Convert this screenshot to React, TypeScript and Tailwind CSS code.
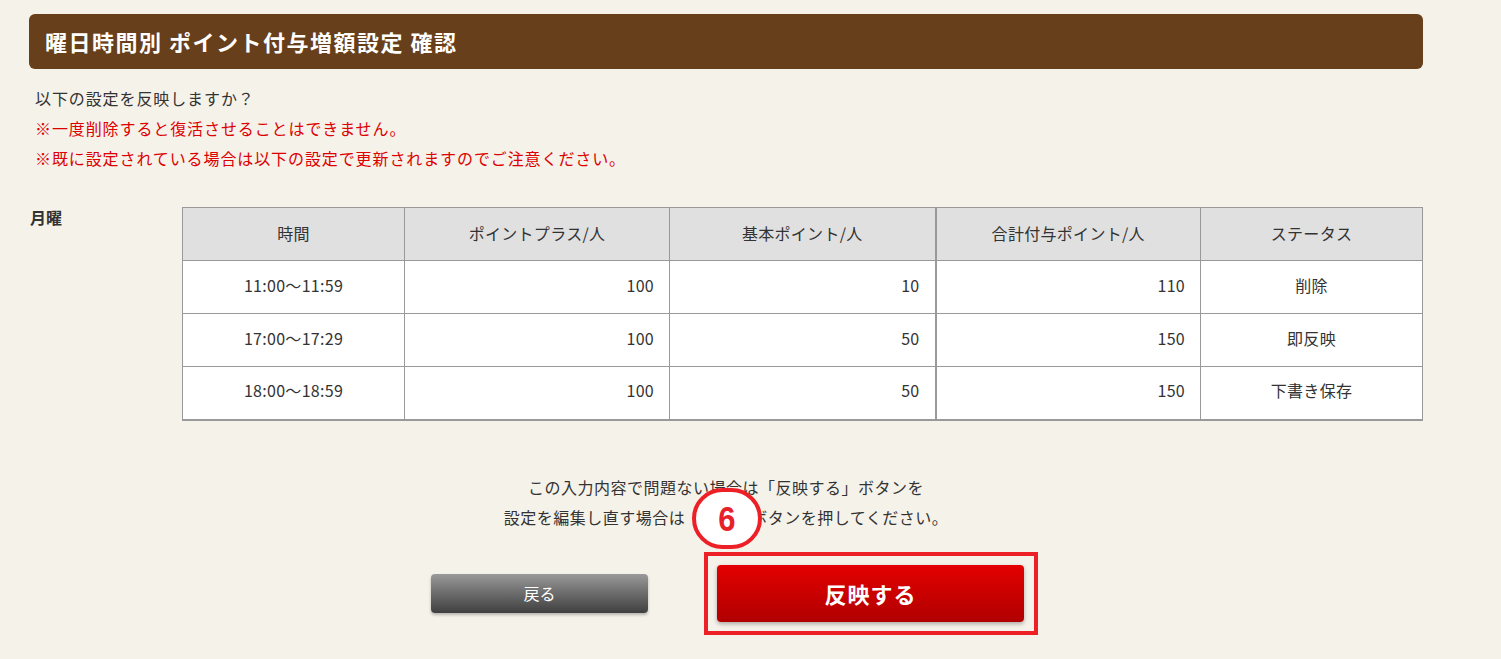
import React from "react";

const rows = [
  { time: "11:00〜11:59", plus: "100", base: "10", total: "110", status: "削除" },
  { time: "17:00〜17:29", plus: "100", base: "50", total: "150", status: "即反映" },
  { time: "18:00〜18:59", plus: "100", base: "50", total: "150", status: "下書き保存" },
];

export default function App() {
  const font = { fontFamily: '"Noto Sans CJK JP", "Noto Sans", sans-serif' };
  return (
    <div className="min-h-[659px] w-[1501px] bg-[#f5f2ea] pt-[14px] text-[#333]" style={font}>
      <div className="ml-[29px] w-[1394px]">
        <div className="flex h-[55px] items-center rounded-[6px] bg-[#673f1b] pl-[16px]">
          <h1 className="text-[22px] font-bold tracking-[1.5px] text-white">曜日時間別 ポイント付与増額設定 確認</h1>
        </div>

        <div className="mt-[14px] pl-[6px] text-[16px] leading-[30px] tracking-[0.9px]">
          <p>以下の設定を反映しますか？</p>
          <p className="text-[#dd0000]">※一度削除すると復活させることはできません。</p>
          <p className="text-[#dd0000]">※既に設定されている場合は以下の設定で更新されますのでご注意ください。</p>
        </div>

        <div className="mt-[34px] flex">
          <div className="w-[154px] pl-[1px] text-[16px] font-bold leading-[20px]">月曜</div>
          <table className="w-[1240px] table-fixed border-collapse border-b-2 border-b-[#999] text-[16px] tracking-[0.3px]">
            <colgroup>
              <col className="w-[222px]" />
              <col className="w-[265px]" />
              <col className="w-[266px]" />
              <col className="w-[265px]" />
              <col className="w-[222px]" />
            </colgroup>
            <thead>
              <tr className="h-[53px] bg-[#e0e0e0]">
                <th className="border border-[#999] pb-[3px] font-normal">時間</th>
                <th className="border border-[#999] pb-[3px] font-normal">ポイントプラス/人</th>
                <th className="border border-[#999] pb-[3px] font-normal">基本ポイント/人</th>
                <th className="border border-[#999] border-l-2 pb-[3px] font-normal">合計付与ポイント/人</th>
                <th className="border border-[#999] pb-[3px] font-normal">ステータス</th>
              </tr>
            </thead>
            <tbody>
              {rows.map((r) => (
                <tr key={r.time} className="h-[53px] bg-white">
                  <td className="border border-[#999] pb-[5px] text-center">{r.time}</td>
                  <td className="border border-[#999] pb-[5px] pr-[15px] text-right">{r.plus}</td>
                  <td className="border border-[#999] pb-[5px] pr-[15px] text-right">{r.base}</td>
                  <td className="border border-[#999] border-l-2 pb-[5px] pr-[15px] text-right">{r.total}</td>
                  <td className="border border-[#999] pb-[5px] text-center">{r.status}</td>
                </tr>
              ))}
            </tbody>
          </table>
        </div>

        <div className="relative mt-[51px] text-center text-[16px] leading-[30px] tracking-[0.5px]">
          <p>この入力内容で問題ない場合は「反映する」ボタンを</p>
          <p>設定を編集し直す場合は「戻る」ボタンを押してください。</p>
          <div className="absolute left-[663px] top-[16px] flex h-[61px] w-[70px] items-center justify-center rounded-full border-[4px] border-[#ee2027] bg-white">
            <span className="scale-y-[1.15] text-[31px] font-bold leading-none text-[#e8202a]" style={{ fontFamily: '"Liberation Sans", Arial, sans-serif' }}>6</span>
          </div>
        </div>

        <div className="mt-[33px] flex items-center justify-center gap-[69px] pl-[3px]">
          <button className="h-[39px] w-[217px] rounded-[4px] bg-gradient-to-b from-[#9a9a9a] to-[#404040] text-[16px] text-white shadow-[0_2px_3px_rgba(0,0,0,0.25)]">
            戻る
          </button>
          <div className="relative">
            <button className="h-[57px] w-[307px] rounded-[4px] bg-gradient-to-b from-[#e40000] to-[#b00000] text-[22px] font-bold tracking-[1px] text-white shadow-[0_2px_4px_rgba(0,0,0,0.3)]">
              反映する
            </button>
            <div className="pointer-events-none absolute -bottom-[13px] -left-[13px] -right-[14px] -top-[13px] border-[4px] border-[#ee2027]" />
          </div>
        </div>
      </div>
    </div>
  );
}
